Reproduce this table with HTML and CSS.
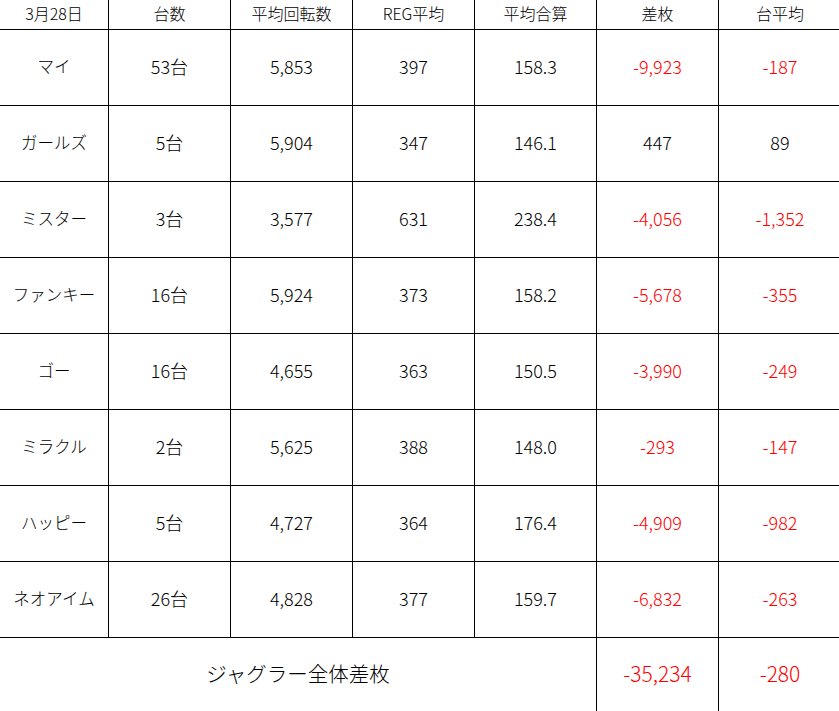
FILE: index.html
```html
<!DOCTYPE html>
<html lang="ja">
<head>
<meta charset="utf-8">
<title>3月28日 ジャグラー</title>
<link rel="stylesheet" href="styles.css">
</head>
<body>
<div class="sheet">
  <div class="cell head">3月28日</div>
  <div class="cell head">台数</div>
  <div class="cell head">平均回転数</div>
  <div class="cell head">REG平均</div>
  <div class="cell head">平均合算</div>
  <div class="cell head">差枚</div>
  <div class="cell head last">台平均</div>

  <div class="cell name">マイ</div>
  <div class="cell num">53台</div>
  <div class="cell num">5,853</div>
  <div class="cell num">397</div>
  <div class="cell num">158.3</div>
  <div class="cell num neg">-9,923</div>
  <div class="cell num neg last">-187</div>

  <div class="cell name">ガールズ</div>
  <div class="cell num">5台</div>
  <div class="cell num">5,904</div>
  <div class="cell num">347</div>
  <div class="cell num">146.1</div>
  <div class="cell num">447</div>
  <div class="cell num last">89</div>

  <div class="cell name">ミスター</div>
  <div class="cell num">3台</div>
  <div class="cell num">3,577</div>
  <div class="cell num">631</div>
  <div class="cell num">238.4</div>
  <div class="cell num neg">-4,056</div>
  <div class="cell num neg last">-1,352</div>

  <div class="cell name">ファンキー</div>
  <div class="cell num">16台</div>
  <div class="cell num">5,924</div>
  <div class="cell num">373</div>
  <div class="cell num">158.2</div>
  <div class="cell num neg">-5,678</div>
  <div class="cell num neg last">-355</div>

  <div class="cell name">ゴー</div>
  <div class="cell num">16台</div>
  <div class="cell num">4,655</div>
  <div class="cell num">363</div>
  <div class="cell num">150.5</div>
  <div class="cell num neg">-3,990</div>
  <div class="cell num neg last">-249</div>

  <div class="cell name">ミラクル</div>
  <div class="cell num">2台</div>
  <div class="cell num">5,625</div>
  <div class="cell num">388</div>
  <div class="cell num">148.0</div>
  <div class="cell num neg">-293</div>
  <div class="cell num neg last">-147</div>

  <div class="cell name">ハッピー</div>
  <div class="cell num">5台</div>
  <div class="cell num">4,727</div>
  <div class="cell num">364</div>
  <div class="cell num">176.4</div>
  <div class="cell num neg">-4,909</div>
  <div class="cell num neg last">-982</div>

  <div class="cell name">ネオアイム</div>
  <div class="cell num">26台</div>
  <div class="cell num">4,828</div>
  <div class="cell num">377</div>
  <div class="cell num">159.7</div>
  <div class="cell num neg">-6,832</div>
  <div class="cell num neg last">-263</div>

  <div class="cell total-label">ジャグラー全体差枚</div>
  <div class="cell total neg">-35,234</div>
  <div class="cell total neg last">-280</div>
</div>
</body>
</html>
```

FILE: styles.css
```css
html, body {
  margin: 0;
  padding: 0;
  background: #ffffff;
}

body {
  font-family: "Noto Sans CJK JP", "Noto Sans", sans-serif;
  font-weight: 300;
  color: #000000;
}

.sheet {
  display: grid;
  grid-template-columns: 109px 122px 122px 122px 122px 122px 122px;
  grid-template-rows: 30px repeat(8, 76px) 80px;
  width: 839px;
  overflow: hidden;
}

.cell {
  display: flex;
  align-items: center;
  justify-content: center;
  border-right: 1px solid #000;
  border-bottom: 1px solid #000;
  box-sizing: border-box;
  white-space: nowrap;
}

.cell.last {
  border-right: none;
}

.head {
  font-size: 16px;
  padding-bottom: 3px;
}

.name {
  font-size: 16.5px;
  padding-bottom: 4px;
}

.num {
  font-size: 18px;
  padding-bottom: 4px;
}

.neg {
  color: #ff0000;
}

.total-label {
  grid-column: 1 / span 5;
  font-size: 20.5px;
  border-bottom: none;
  padding-bottom: 11px;
}

.total {
  font-size: 21px;
  border-bottom: none;
  padding-bottom: 10px;
}
```
